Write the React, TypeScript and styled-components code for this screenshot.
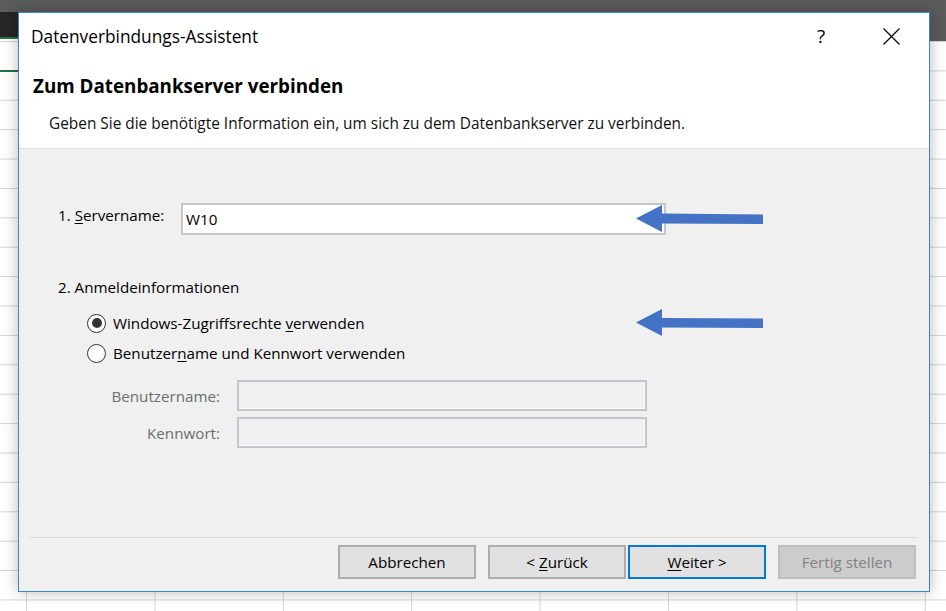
import React from "react";
import styled, { createGlobalStyle, css } from "styled-components";

const GlobalStyle = createGlobalStyle`
  html, body { margin: 0; padding: 0; background: #ffffff; overflow: hidden; }
  * { box-sizing: border-box; }
`;

const FONT = `"Open Sans", "Noto Sans", "Liberation Sans", sans-serif`;

const Desktop = styled.div`
  position: relative;
  width: 946px;
  height: 611px;
  overflow: hidden;
  font-family: ${FONT};
  background:
    linear-gradient(#5b5b5b, #5b5b5b) 0 0 / 100% 12px no-repeat,
    linear-gradient(#262626, #262626) 0 12px / 18px 25px no-repeat,
    linear-gradient(#5b5b5b, #5b5b5b) 900px 12px / 46px 29px no-repeat,
    linear-gradient(#217346, #217346) 0 37px / 18px 2px no-repeat,
    linear-gradient(#217346, #217346) 0 70px / 18px 2px no-repeat,
    linear-gradient(to bottom, transparent 28.4px, #d4d4d4 28.4px) 0 12.6px / 100% 29.4px repeat-y,
    linear-gradient(to right, #d4d4d4 1px, transparent 1px) 26px 0 / 128.4px 100% repeat-x,
    #ffffff;
`;

const Dialog = styled.div`
  position: absolute;
  left: 18px;
  top: 12px;
  width: 912px;
  height: 580px;
  border: 1px solid #3a86d4;
  background: #f0f0f0;
  box-shadow: 0 0 14px rgba(0, 0, 0, 0.28);
  display: flex;
  flex-direction: column;
  color: #000;
`;

const HeaderArea = styled.div`
  background: #ffffff;
  border-bottom: 1px solid #dfdfdf;
  display: flex;
  flex-direction: column;
  padding-bottom: 14px;
`;

const TitleBar = styled.div`
  height: 48px;
  display: flex;
  align-items: center;
  padding-left: 12px;
  padding-right: 15px;
`;

const TitleText = styled.div`
  flex: 1;
  font-size: 17.3px;
  line-height: 20px;
  color: #000;
`;

const WindowButton = styled.div`
  width: 46px;
  height: 32px;
  display: flex;
  align-items: center;
  justify-content: center;
  font-size: 19px;
  color: #000;
`;

const WindowButtons = styled.div`
  display: flex;
  gap: 24px;
  margin-top: -2px;
`;

const Heading = styled.div`
  margin-top: 13px;
  padding-left: 14px;
  font-size: 18.8px;
  font-weight: 700;
  line-height: 24px;
`;

const Description = styled.div`
  margin-top: 16px;
  padding-left: 30px;
  font-size: 15.4px;
  line-height: 20px;
  color: #111;
`;

const Body = styled.div`
  flex: 1;
  display: flex;
  flex-direction: column;
  font-size: 15.2px;
  line-height: 20px;
`;

const Content = styled.div`
  display: flex;
  flex-direction: column;
  padding-left: 39px;
`;

const ServerRow = styled.div`
  margin-top: 54px;
  display: flex;
  align-items: flex-start;
`;

const Label = styled.div<{ $width?: number }>`
  width: ${(p) => (p.$width ? `${p.$width}px` : "auto")};
  padding-top: 2px;
  white-space: nowrap;
`;

const TextField = styled.div<{ $disabled?: boolean; $width: number }>`
  width: ${(p) => p.$width}px;
  height: ${(p) => (p.$disabled ? 31 : 32)}px;
  display: flex;
  align-items: center;
  padding-left: 3px;
  font-size: 15.2px;
  ${(p) =>
    p.$disabled
      ? css`
          background: #f0f0f0;
          border: 2px solid #c4c4ca;
          box-shadow: inset -1px -1px 0 #fbfbfb;
        `
      : css`
          background: #ffffff;
          border: 2px solid #c6c6c6;
        `}
`;

const SectionLabel = styled.div`
  margin-top: 42px;
`;

const RadioGroup = styled.div`
  margin-top: 16px;
  margin-left: 29px;
  display: flex;
  flex-direction: column;
  gap: 10px;
`;

const RadioRow = styled.div`
  display: flex;
  align-items: center;
  gap: 7px;
  height: 20px;
  white-space: nowrap;
`;

const RadioCircle = styled.span<{ $checked?: boolean }>`
  width: 19px;
  height: 19px;
  border-radius: 50%;
  border: 1.4px solid #333;
  background: #fff;
  display: flex;
  align-items: center;
  justify-content: center;
  &::after {
    content: "";
    display: ${(p) => (p.$checked ? "block" : "none")};
    width: 10px;
    height: 10px;
    border-radius: 50%;
    background: #333;
  }
`;

const Credentials = styled.div`
  margin-top: 17px;
  margin-left: 42px;
  display: grid;
  grid-template-columns: 120px 410px;
  column-gap: 17px;
  row-gap: 6px;
  align-items: center;
`;

const DisabledLabel = styled.div`
  text-align: right;
  color: #6d6d6d;
  white-space: nowrap;
`;

const Spacer = styled.div`
  flex: 1;
`;

const Footer = styled.div`
  margin: 0 11px;
  border-top: 1px solid #dadada;
  padding: 7px 2px 12px 0;
  display: flex;
  justify-content: flex-end;
`;

const ButtonGroup = styled.div<{ $gap: number }>`
  display: flex;
  gap: ${(p) => p.$gap}px;
`;

const Button = styled.div<{ $variant?: "default" | "primary" | "disabled" }>`
  width: 138px;
  height: 34px;
  display: flex;
  align-items: center;
  justify-content: center;
  font-size: 15.2px;
  white-space: pre;
  background: #e1e1e1;
  border: 2px solid #adadad;
  color: #000;
  ${(p) =>
    p.$variant === "primary" &&
    css`
      border-color: #0078d7;
    `}
  ${(p) =>
    p.$variant === "disabled" &&
    css`
      background: #cccccc;
      border-color: #bfbfbf;
      color: #838383;
    `}
`;

const U = styled.span`
  text-decoration: underline;
  text-underline-offset: 2px;
`;

const Annotations = styled.svg`
  position: absolute;
  left: 0;
  top: 0;
  width: 946px;
  height: 611px;
  pointer-events: none;
`;

const CloseIcon = () => (
  <svg width="17" height="17" viewBox="0 0 17 17">
    <path d="M0.5 0.5 L16.5 16.5 M16.5 0.5 L0.5 16.5" stroke="#000" strokeWidth="1.2" fill="none" />
  </svg>
);

export default function App() {
  return (
    <>
      <GlobalStyle />
      <Desktop>
        <Dialog>
          <HeaderArea>
            <TitleBar>
              <TitleText>Datenverbindungs-Assistent</TitleText>
              <WindowButtons>
                <WindowButton>?</WindowButton>
                <WindowButton>
                  <CloseIcon />
                </WindowButton>
              </WindowButtons>
            </TitleBar>
            <Heading>Zum Datenbankserver verbinden</Heading>
            <Description>
              Geben Sie die benötigte Information ein, um sich zu dem Datenbankserver zu verbinden.
            </Description>
          </HeaderArea>
          <Body>
            <Content>
              <ServerRow>
                <Label $width={123}>
                  {"1. "}
                  <U>S</U>ervername:
                </Label>
                <TextField $width={485}>W10</TextField>
              </ServerRow>
              <SectionLabel>2. Anmeldeinformationen</SectionLabel>
              <RadioGroup>
                <RadioRow>
                  <RadioCircle $checked />
                  <span>
                    {"Windows-Zugriffsrechte "}
                    <U>v</U>erwenden
                  </span>
                </RadioRow>
                <RadioRow>
                  <RadioCircle />
                  <span>
                    Benutzer<U>n</U>ame und Kennwort verwenden
                  </span>
                </RadioRow>
              </RadioGroup>
              <Credentials>
                <DisabledLabel>Benutzername:</DisabledLabel>
                <TextField $disabled $width={410} />
                <DisabledLabel>Kennwort:</DisabledLabel>
                <TextField $disabled $width={410} />
              </Credentials>
            </Content>
            <Spacer />
            <Footer>
              <ButtonGroup $gap={12}>
                <Button>Abbrechen</Button>
                <ButtonGroup $gap={2}>
                  <Button>
                    {"< "}
                    <U>Z</U>urück
                  </Button>
                  <Button $variant="primary">
                    <U>W</U>
                    {"eiter >"}
                  </Button>
                </ButtonGroup>
                <Button $variant="disabled">Fertig stellen</Button>
              </ButtonGroup>
            </Footer>
          </Body>
        </Dialog>
        <Annotations viewBox="0 0 946 611">
          <polygon
            points="636,218.5 662,205 662,213.5 763,214.5 763,224 662,223.5 662,232"
            fill="#4472c4"
          />
          <polygon
            points="636,322.5 662,309 662,318 763,318.5 763,328 662,327.5 662,336"
            fill="#4472c4"
          />
        </Annotations>
      </Desktop>
    </>
  );
}
